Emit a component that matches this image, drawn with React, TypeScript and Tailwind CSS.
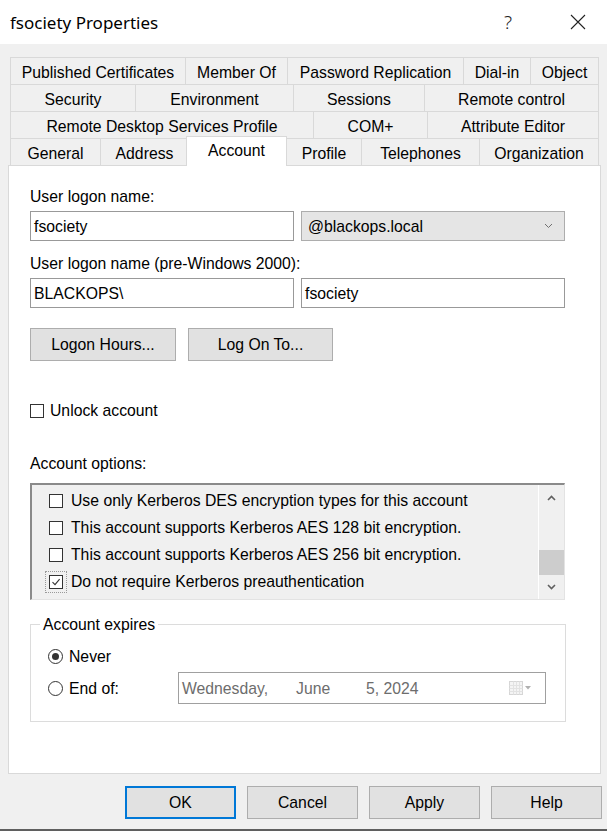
import React from 'react'

const ROWS: { label: string; w: number }[][] = [
  [
    { label: 'Published Certificates', w: 175 },
    { label: 'Member Of', w: 102 },
    { label: 'Password Replication', w: 176 },
    { label: 'Dial-in', w: 67 },
    { label: 'Object', w: 69 },
  ],
  [
    { label: 'Security', w: 125 },
    { label: 'Environment', w: 158 },
    { label: 'Sessions', w: 131 },
    { label: 'Remote control', w: 175 },
  ],
  [
    { label: 'Remote Desktop Services Profile', w: 303 },
    { label: 'COM+', w: 114 },
    { label: 'Attribute Editor', w: 172 },
  ],
]

const BOTTOM_ROW = [
  { label: 'General', w: 90 },
  { label: 'Address', w: 88 },
  { label: 'Account', w: 98, active: true },
  { label: 'Profile', w: 75 },
  { label: 'Telephones', w: 118 },
  { label: 'Organization', w: 120 },
]

const OPTIONS = [
  { label: 'Use only Kerberos DES encryption types for this account', checked: false },
  { label: 'This account supports Kerberos AES 128 bit encryption.', checked: false },
  { label: 'This account supports Kerberos AES 256 bit encryption.', checked: false },
  { label: 'Do not require Kerberos preauthentication', checked: true },
]

function CheckBox({ checked }: { checked?: boolean }) {
  return (
    <span className="w-[14px] h-[14px] border border-[#333333] bg-white flex items-center justify-center shrink-0">
      {checked && (
        <svg width="10" height="10" viewBox="0 0 10 10">
          <path d="M1.5 5.2 L4 7.6 L8.6 2.2" fill="none" stroke="#333" strokeWidth="1.1" />
        </svg>
      )}
    </span>
  )
}

function Radio({ checked }: { checked?: boolean }) {
  return (
    <span className="w-[15px] h-[15px] rounded-full border border-[#333333] bg-white flex items-center justify-center shrink-0">
      {checked && <span className="w-[7px] h-[7px] rounded-full bg-[#333333]" />}
    </span>
  )
}

function Chevron({ up, color = '#606060', thin }: { up?: boolean; color?: string; thin?: boolean }) {
  return (
    <svg width="9" height="6" viewBox="0 0 9 6">
      <path
        d={up ? 'M1 5 L4.5 1.5 L8 5' : 'M1 1 L4.5 4.5 L8 1'}
        fill="none"
        stroke={color}
        strokeWidth={thin ? 1 : 1.6}
      />
    </svg>
  )
}

function DlgButton({ label, w, primary }: { label: string; w: number; primary?: boolean }) {
  return (
    <button
      className={`h-[33px] bg-[#e1e1e1] flex items-center justify-center ${
        primary ? 'border-2 border-[#0078d7]' : 'border border-[#adadad]'
      }`}
      style={{ width: w }}
    >
      {label}
    </button>
  )
}

export default function App() {
  return (
    <div className="w-[607px] h-[831px] bg-[#f0f0f0] flex flex-col font-['Liberation_Sans',Arial,sans-serif] text-[15.75px] text-black leading-[17px] overflow-hidden">
      {/* Title bar */}
      <div className="h-[44px] bg-white flex items-center shrink-0">
        <span className="ml-[10px] text-[17px] font-['Noto_Sans',sans-serif] text-black">fsociety Properties</span>
        <span className="ml-auto mr-[58px] text-[19px] font-['Noto_Sans',sans-serif] font-light text-[#222]">?</span>
        <svg width="16" height="16" viewBox="0 0 16 16" className="mr-[21px]">
          <path d="M1 1 L15 15 M15 1 L1 15" stroke="#222" strokeWidth="1.1" />
        </svg>
      </div>

      {/* Tabs */}
      <div className="mt-[13px] ml-[10px] w-[589px] flex flex-col">
        {ROWS.map((row, i) => (
          <div key={i} className="flex h-[27px]">
            {row.map((t, j) => (
              <div
                key={t.label}
                className={`border-t border-l border-[#d9d9d9] flex items-center justify-center pt-[2px] whitespace-nowrap ${
                  j === row.length - 1 ? 'border-r' : ''
                }`}
                style={{ width: t.w }}
              >
                {t.label}
              </div>
            ))}
          </div>
        ))}
        <div className="flex h-[27px]">
          {BOTTOM_ROW.map((t, j) => (
            <div
              key={t.label}
              className={
                t.active
                  ? 'relative z-10 -mt-[2px] -mb-[1px] -ml-[2px] -mr-[1px] bg-white border-t border-l border-r border-[#d9d9d9] flex items-start justify-center pt-[5px]'
                  : `border-t border-l border-[#d9d9d9] flex items-center justify-center pt-[2px] ${
                      j === BOTTOM_ROW.length - 1 ? 'border-r' : ''
                    }`
              }
              style={{ width: t.active ? t.w + 3 : t.w }}
            >
              {t.label}
            </div>
          ))}
        </div>
      </div>

      {/* Panel */}
      <div className="ml-[8px] w-[593px] h-[609px] bg-white border border-[#d9d9d9] flex flex-col pl-[21px] shrink-0">
        <div className="mt-[22px]">User logon name:</div>
        <div className="mt-[6px] flex gap-[7px]">
          <div className="w-[264px] h-[30px] border border-[#999999] flex items-center px-[3px]">fsociety</div>
          <div className="w-[264px] h-[30px] border border-[#adadad] bg-[#e5e5e5] flex items-center pl-[6px] pr-[11px]">
            <span>@blackops.local</span>
            <span className="ml-auto">
              <Chevron color="#707070" thin />
            </span>
          </div>
        </div>

        <div className="mt-[14px]">User logon name (pre-Windows 2000):</div>
        <div className="mt-[6px] flex gap-[7px]">
          <div className="w-[264px] h-[30px] border border-[#999999] flex items-center px-[3px]">BLACKOPS\</div>
          <div className="w-[264px] h-[30px] border border-[#999999] flex items-center px-[3px]">fsociety</div>
        </div>

        <div className="mt-[20px] flex gap-[12px]">
          <button className="w-[146px] h-[33px] bg-[#e1e1e1] border border-[#adadad]">Logon Hours...</button>
          <button className="w-[145px] h-[33px] bg-[#e1e1e1] border border-[#adadad]">Log On To...</button>
        </div>

        <div className="mt-[41px] flex items-center gap-[6px]">
          <CheckBox />
          <span>Unlock account</span>
        </div>

        <div className="mt-[36px]">Account options:</div>

        {/* Options list */}
        <div className="mt-[11px] w-[535px] h-[117px] bg-[#f0f0f0] border-t-2 border-l-2 border-t-[#8a8a8a] border-l-[#8a8a8a] border-b border-r border-b-[#e3e3e3] border-r-[#e3e3e3] flex">
          <div className="flex-1 flex flex-col pt-[2px] pl-[17px]">
            {OPTIONS.map((o) => (
              <div key={o.label} className="h-[27px] flex items-center gap-[8px] whitespace-nowrap">
                <span className={o.checked ? 'outline outline-1 outline-dotted outline-[#9a9a9a] outline-offset-[3px]' : ''}>
                  <CheckBox checked={o.checked} />
                </span>
                <span>{o.label}</span>
              </div>
            ))}
          </div>
          <div className="w-[26px] border-l border-white flex flex-col items-center">
            <div className="h-[24px] flex items-center justify-center mt-[1px]">
              <Chevron up />
            </div>
            <div className="flex-1 w-full flex flex-col">
              <div className="h-[40px]" />
              <div className="h-[25px] w-full bg-[#cdcdcd]" />
            </div>
            <div className="h-[24px] flex items-center justify-center">
              <Chevron />
            </div>
          </div>
        </div>

        {/* Account expires */}
        <fieldset className="mt-[16px] w-[536px] h-[106px] border border-[#dcdcdc]">
          <legend className="ml-[9px] px-[3px]">Account expires</legend>
          <div className="mt-[15px] ml-[17px] flex items-center gap-[6px]">
            <Radio checked />
            <span>Never</span>
          </div>
          <div className="mt-[7px] ml-[17px] flex items-center">
            <Radio />
            <span className="ml-[6px] w-[109px]">End of:</span>
            <div className="w-[368px] h-[32px] border border-[#a0a0a0] bg-white flex items-center pl-[3px] pr-[14px] text-[#6d6d6d]">
              <span className="w-[114px]">Wednesday,</span>
              <span className="w-[70px]">June</span>
              <span>5, 2024</span>
              <span className="ml-auto flex items-center gap-[2px]">
                <svg width="14" height="14" viewBox="0 0 14 14">
                  <rect x="0.5" y="0.5" width="13" height="13" fill="#f4f4f4" stroke="#d6d6d6" />
                  <path d="M0.5 4.5 H13.5 M0.5 7.5 H13.5 M0.5 10.5 H13.5 M4.5 0.5 V13.5 M7.5 0.5 V13.5 M10.5 0.5 V13.5" stroke="#e2e2e2" />
                </svg>
                <svg width="6" height="4" viewBox="0 0 6 4">
                  <path d="M0 0 H6 L3 3.5 Z" fill="#b0b0b0" />
                </svg>
              </span>
            </div>
          </div>
        </fieldset>
      </div>

      {/* Dialog buttons */}
      <div className="mt-[12px] flex justify-end gap-[11px] pr-[5px]">
        <DlgButton label="OK" w={111} primary />
        <DlgButton label="Cancel" w={111} />
        <DlgButton label="Apply" w={111} />
        <DlgButton label="Help" w={111} />
      </div>
      <div className="mt-auto h-[2px] bg-[#5f5f5f]" />
    </div>
  )
}
